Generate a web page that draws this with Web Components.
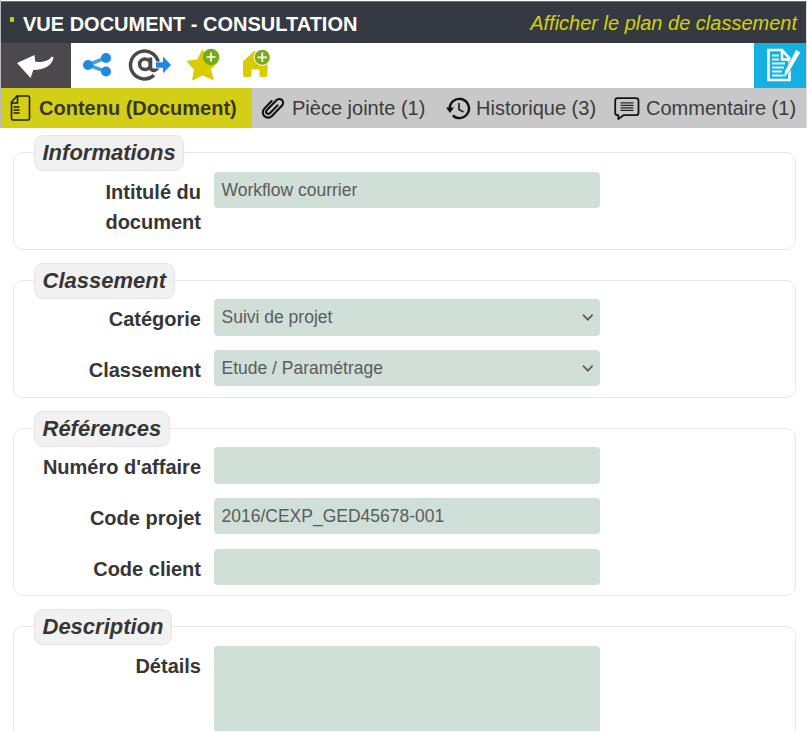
<!DOCTYPE html>
<html lang="fr">
<head>
<meta charset="utf-8">
<title>Vue document</title>
<style>
html,body{margin:0;height:732px;overflow:hidden;background:#fff}
body{font-family:"Liberation Sans",Arial,sans-serif;color:#363636}
</style>
</head>
<body>
<ged-app></ged-app>
<script>
const define=(name,html)=>customElements.define(name,class extends HTMLElement{
  connectedCallback(){
    if(this.shadowRoot)return;
    const t=document.createElement('template');
    t.innerHTML=typeof html==='function'?html(this):html;
    this.attachShadow({mode:'open'}).append(t.content.cloneNode(true));
  }
});

const icons={
back:['39','28',`<path fill="#fff" d="M0 13 17.500 5 18.200 11.800C25 12.500 32 11 34.800 6.500L36.500 7.500C35.500 15 28 20 16.300 20L13.600 28Z"/>`],
share:['28','24',`<path d="M23 4.700 5 12l18 6.500" fill="none" stroke="#4a9fdc" stroke-width="3.600"/><circle cx="5" cy="12" r="5" fill="#1e88e5"/><circle cx="23" cy="5" r="5" fill="#1e88e5"/><circle cx="23" cy="18.500" r="5" fill="#1e88e5"/>`],
mail:['42','33',`<g fill="none" stroke="#494949" stroke-width="3.500"><path d="M25 27.300A14 14 0 1 1 29.500 16C29.500 23 22 24.500 21.500 19.500V9.500"/><ellipse cx="16" cy="16.300" rx="5.400" ry="5.300"/></g><path fill="#fff" d="M26 13.500h6V7l10 10-10 10v-6.500h-6z"/><path fill="#1e88e5" d="M27 14.300h7V8.500l8 8.500L34 25.300v-5.600h-7z"/>`],
star:['35','33',`<path fill="#dacb00" stroke="#dacb00" stroke-width="1.500" stroke-linejoin="round" d="m16.500 2.500 4.700 9.700 10.300 1.600-7.600 7.400 3.200 10-10.600-4.600-9.600 5 2-10.400L1.500 13.500l10.300-1.500z"/><circle cx="25" cy="9" r="8.300" fill="#76ab14"/><path d="M25 4.500v9M20.500 9h9" stroke="#fff" stroke-width="1.700"/>`],
home:['31','33',`<path fill="#dacb00" d="M1 13.500 11.500 3.500H15L25.500 14v13q0 2-2 2h-4q-2 0-2-2v-5.500h-8V27q0 2-2 2H3q-2 0-2-2z"/><circle cx="20.300" cy="9.300" r="8" fill="#76ab14" stroke="#fff" stroke-width="1"/><path d="M20.300 4.600v9.400M15.600 9.300h9.400" stroke="#fff" stroke-width="1.700"/>`],
edit:['34','35',`<path d="M2.500 2h13.500l7.500 8.500v21.500h-21zM16 2v9.500h7.500" fill="none" stroke="#fff" stroke-width="2.600"/><path d="M6 7.500h7M6 11.500h7M6 15.500h13M6 19.500h12M6 23.500h10M6 27.500h13" stroke="#e4f6fc" stroke-width="1.900"/><path fill="#fff" stroke="#19aee2" stroke-width=".7" d="m30 1.500 4.500 3L22.500 25l-5 5 1.300-7z"/>`],
doc:['20','26',`<path d="M7 1h11q1.500 0 1.500 1.500v21q0 1.500-1.500 1.500H3q-1.500 0-1.500-1.500V7zM7.500 1.500v6.500H2M3.500 12h6M3.500 15h6M3.500 18h6" fill="none" stroke="#1c2000" stroke-width="1.600"/>`],
clip:['24','25',`<path d="M-5.300-4.500V6a5.300 5.300 0 0 0 10.600 0V-8.500a3.900 3.900 0 0 0-7.800 0V5.500a2.200 2.200 0 0 0 4.400 0V-5.500" transform="translate(11.300 12) rotate(44)" fill="none" stroke="#111" stroke-width="2.100" stroke-linecap="round"/>`],
history:['25','23',`<path d="M3.800 12.500A9.600 9.600 0 1 1 6.800 18.500" fill="none" stroke="#111" stroke-width="2.400"/><path d="M0 10.500h8l-4 5.500z" fill="#111"/><path d="M13 6v6.500l4.500 2.500" fill="none" stroke="#222" stroke-width="1.700"/>`],
comment:['26','23',`<path d="M3.500 1.200h18.500q2.500 0 2.500 2.500v12q0 2.500-2.500 2.500H9.500L4.300 22V18.200H3.500Q1.200 18.200 1.200 15.700v-12Q1.200 1.200 3.500 1.200z" fill="none" stroke="#151515" stroke-width="1.800" stroke-linejoin="round"/><path d="M6.500 5.800h13M6.500 8.300h13M6.500 10.800h13M6.500 13.300h13" stroke="#252525" stroke-width="1.300"/>`],
chev:['12','8',`<path d="m1 1.700 4.800 5 4.800-5" fill="none" stroke="#5c5c5c" stroke-width="1.700"/>`]
};
define('ged-icon',el=>{const [w,h,s]=icons[el.getAttribute('name')];
return `<style>:host{display:block;flex:none;width:${w}px;height:${h}px}svg{display:block;overflow:visible}</style><svg width="${w}" height="${h}" viewBox="0 0 ${w} ${h}">${s}</svg>`});

define('ged-header',`<style>
:host{display:flex;box-sizing:border-box;height:42px;background:#353a40;border-top:1px solid #6d7175;padding:0 9px 0 8px;align-items:flex-start;line-height:23px;font-size:20px}
i{width:4px;height:5px;border-radius:1px;background:#d3cb16;margin:15px 11px 0 1px;flex:none}
b{color:#fff;margin-top:11px;margin-left:-2px;white-space:nowrap}
a{margin-left:auto;margin-top:10px;color:#d3cf13;font-style:italic;white-space:nowrap}
</style><i></i><b><slot name="title"></slot></b><a><slot name="link"></slot></a>`);

define('ged-toolbar',`<style>
:host{display:flex;height:45px;align-items:flex-start;background:#fff}
.back{width:70px;height:45px;background:#4c484e;box-sizing:border-box;padding:7px 0 0 16px}
.edit{margin-left:auto;width:52px;height:45px;background:#14b0e2;box-sizing:border-box;padding:5px 0 0 12px}
.share{margin:10px 0 0 12px}.mail{margin:5px 0 0 18px}.star{margin:5px 0 0 15px}.home{margin:5px 0 0 21px}
</style><div class="back"><ged-icon name="back"></ged-icon></div>
<ged-icon class="share" name="share"></ged-icon><ged-icon class="mail" name="mail"></ged-icon><ged-icon class="star" name="star"></ged-icon><ged-icon class="home" name="home"></ged-icon>
<div class="edit"><ged-icon name="edit"></ged-icon></div>`);

define('ged-tab',el=>`<style>
:host{display:flex;box-sizing:border-box;height:40px;align-items:center;font-size:20px;line-height:24px;white-space:nowrap;color:#3c3c3c;padding-left:var(--pad)}
:host([active]){background:#d3cf16;border-bottom:1px solid #fbb03b;font-weight:bold;color:#383830}
span{margin-left:var(--gap)}
</style><ged-icon name="${el.getAttribute('icon')}"></ged-icon><span><slot></slot></span>`);

define('ged-tabs',`<style>:host{display:grid;grid-template-columns:251px 186px 169px 1fr;height:40px;background:#c8c8c8}</style><slot></slot>`);

define('ged-section',el=>`<style>
:host{display:block;box-sizing:border-box;border:1px solid #e8e8e8;border-radius:10px;margin:0 10px 30px 12px;height:var(--h)}
.legend{display:block;width:max-content;box-sizing:border-box;height:36px;margin:-18px 0 0 20px;border:1px solid #e6e6e6;border-radius:9px;background:#f1f1f1;padding:0 7.500px;font:italic bold 22px/33px "Liberation Sans",Arial,sans-serif}
.rows{display:grid;row-gap:14px;padding-top:var(--top,1px)}
</style><div class="legend">${el.getAttribute('legend')}</div><div class="rows"><slot></slot></div>`);

define('ged-field',el=>`<style>
:host{display:grid;grid-template-columns:187px 386px;column-gap:13px;height:var(--row,37px)}
label{text-align:right;font-weight:bold;font-size:20px;line-height:30px;padding-top:5px;white-space:pre-line}
.value{display:flex;box-sizing:border-box;align-items:center;justify-content:space-between;height:var(--fh,36px);border-radius:4px;background:#d0dfd8;color:#5c5c5c;font-size:17.500px;line-height:22px;padding:0 6px 1px 7.500px}
</style><label>${el.getAttribute('label')}</label><div class="value"><span><slot></slot></span>${el.hasAttribute('select')?'<ged-icon name="chev"></ged-icon>':''}</div>`);

define('ged-app',`<style>
:host{display:block;box-sizing:border-box;height:731px;padding:1px 1px 0;overflow:hidden;background:linear-gradient(90deg,#b9bbbd 1px,#fff 1px,#fff 806px,#dcdcdc 806px) 0 0/807px 128px no-repeat}
main{padding-top:24px}
</style>
<ged-header><span slot="title">VUE DOCUMENT - CONSULTATION</span><span slot="link">Afficher le plan de classement</span></ged-header>
<ged-toolbar></ged-toolbar>
<ged-tabs>
<ged-tab active icon="doc" style="--pad:9px;--gap:9px">Contenu (Document)</ged-tab>
<ged-tab icon="clip" style="--pad:9px;--gap:7px">Pièce jointe (1)</ged-tab>
<ged-tab icon="history" style="--pad:8px;--gap:5px">Historique (3)</ged-tab>
<ged-tab icon="comment" style="--pad:7px;--gap:6px">Commentaire (1)</ged-tab>
</ged-tabs>
<main>
<ged-section legend="Informations" style="--h:98px"><ged-field label="Intitulé du
document">Workflow courrier</ged-field></ged-section>
<ged-section legend="Classement" style="--h:118px;--top:.4px"><ged-field select label="Catégorie" style="--fh:37px">Suivi de projet</ged-field><ged-field select label="Classement">Etude / Paramétrage</ged-field></ged-section>
<ged-section legend="Références" style="--h:168px;--top:.4px"><ged-field label="Numéro d'affaire" style="--fh:37px"></ged-field><ged-field label="Code projet">2016/CEXP_GED45678-001</ged-field><ged-field label="Code client"></ged-field></ged-section>
<ged-section legend="Description" style="--h:150px"><ged-field label="Détails" style="--row:100px;--fh:100px"></ged-field></ged-section>
</main>`);
</script>
</body>
</html>
